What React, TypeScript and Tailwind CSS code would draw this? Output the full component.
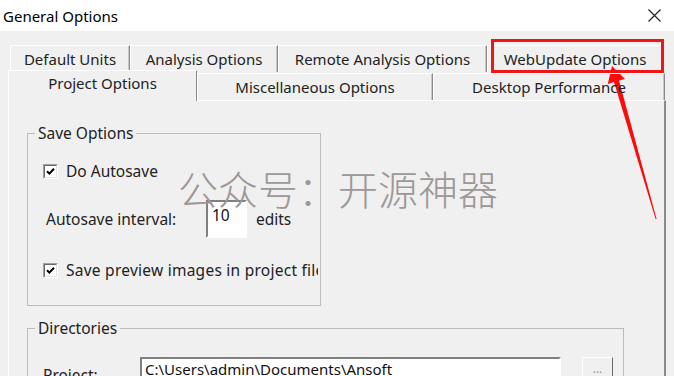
import React from "react";

const FONT = '"Noto Sans", "Noto Sans CJK SC", sans-serif';

function Check() {
  return (
    <div className="w-[15px] h-[15px] border border-t-[#a0a0a0] border-l-[#a0a0a0] border-b-white border-r-white shrink-0">
      <div className="w-full h-full border border-t-[#696969] border-l-[#696969] border-b-[#e3e3e3] border-r-[#e3e3e3] bg-white flex items-center justify-center">
        <svg width="9" height="9" viewBox="0 0 9 9">
          <path d="M1 4.2 L3.4 6.6 L8 1.8" stroke="#000" strokeWidth="2" fill="none" />
        </svg>
      </div>
    </div>
  );
}

function Tab({ label, w, h = "h-[27px]" }: { label: string; w: string; h?: string }) {
  return (
    <div
      className={`${w} ${h} shrink-0 border-t border-l border-t-white border-l-white border-r border-r-[#8a8a8a] shadow-[inset_-1px_0_0_#c8c8c8] flex items-center justify-center text-[#222] whitespace-nowrap`}
    >
      {label}
    </div>
  );
}

export default function App() {
  return (
    <div
      className="relative w-[674px] h-[376px] overflow-hidden bg-[#f0f0f0] text-[15px] leading-[20px]"
      style={{ fontFamily: FONT }}
    >
      {/* Title bar */}
      <div className="h-[31px] bg-white flex items-center justify-between pl-[3px] pr-[13px]">
        <span className="text-[#000] text-[15px]">General Options</span>
        <svg width="13" height="13" viewBox="0 0 13 13">
          <path d="M0.5 0.5 L12.5 12.5 M12.5 0.5 L0.5 12.5" stroke="#222" strokeWidth="1.2" />
        </svg>
      </div>

      {/* Tabs */}
      <div className="pt-[14px]">
        <div className="flex pl-[10px] h-[27px]">
          <Tab label="Default Units" w="w-[120px]" />
          <Tab label="Analysis Options" w="w-[148px]" />
          <Tab label="Remote Analysis Options" w="w-[209px]" />
          <Tab label="WebUpdate Options" w="w-[176px]" />
        </div>
        <div className="relative z-10 flex items-start pl-[8px] h-[30px] -mt-[2px]">
          <div className="w-[189px] h-[31px] shrink-0 bg-[#f0f0f0] border-t border-l border-t-white border-l-white border-r border-r-[#8a8a8a] flex items-start justify-center pt-[2px] text-[#222]">
            Project Options
          </div>
          <div className="mt-[3px]">
            <Tab label="Miscellaneous Options" w="w-[236px]" />
          </div>
          <div className="mt-[3px]">
            <Tab label="Desktop Performance" w="w-[232px]" />
          </div>
        </div>

        {/* Panel */}
        <div className="ml-[8px] w-[658px] h-[300px] border-t border-l border-t-white border-l-white border-r-2 border-r-[#8a8a8a] text-[15.5px]">
          <fieldset className="ml-[18px] mt-[22px] w-[294px] h-[183px] border border-[#bcbcbc] overflow-hidden">
            <legend className="ml-[7px] px-[3px] text-[#222]">Save Options</legend>
            <div className="pl-[15px] flex flex-col">
              <div className="mt-[18px] h-[20px] flex items-center gap-[8px]">
                <Check />
                <span className="text-[#222]">Do Autosave</span>
              </div>
              <div className="mt-[19px] h-[38px] flex items-center">
                <span className="ml-[3px] w-[160px] text-[#222]">Autosave interval:</span>
                <div className="w-[41px] h-[38px] border-2 border-t-[#808080] border-l-[#808080] border-b-white border-r-white bg-white pl-[4px] pt-[3px] text-[#111] leading-[20px]">
                  10
                </div>
                <span className="ml-[9px] text-[#222]">edits</span>
              </div>
              <div className="mt-[22px] h-[20px] w-[275px] overflow-hidden whitespace-nowrap flex items-center gap-[8px]">
                <Check />
                <span className="text-[#222] tracking-[0.25px]">Save preview images in project file</span>
              </div>
            </div>
          </fieldset>

          <fieldset className="ml-[18px] mt-[12px] w-[597px] h-[120px] border border-[#bcbcbc]">
            <legend className="ml-[7px] px-[3px] text-[#222]">Directories</legend>
            <div className="pl-[15px] mt-[19px] flex items-start">
              <span className="w-[97px] mt-[8px] text-[#222]">Project:</span>
              <div className="w-[421px] h-[24px] border-2 border-t-[#808080] border-l-[#808080] border-b-white border-r-white bg-white pl-[3px] text-[#111] text-[15px] leading-[20px] whitespace-nowrap overflow-hidden">
                C:\Users\admin\Documents\Ansoft
              </div>
              <div className="ml-[21px] w-[31px] h-[24px] border border-t-white border-l-white border-r-[#696969] border-b-[#696969] flex items-center justify-center text-[#999] text-[12px]">
                ...
              </div>
            </div>
          </fieldset>
        </div>
      </div>

      {/* Watermark */}
      <div
        className="absolute left-[178px] top-[163px] text-[40px] leading-[50px] font-light text-[#9d9898] whitespace-nowrap pointer-events-none"
        style={{ fontFamily: '"Noto Sans CJK SC", sans-serif' }}
      >
        公众号：开源神器
      </div>

      {/* Red highlight box */}
      <div className="absolute left-[491px] top-[39px] w-[173px] h-[34px] border-[3px] border-[#f01616] pointer-events-none" />

      {/* Red arrow */}
      <svg className="absolute left-0 top-0 pointer-events-none" width="674" height="376" viewBox="0 0 674 376">
        <polygon
          points="612,66 625,79 619,80.5 656.6,219 655.6,219 614,82 607.8,84"
          fill="#ff0a0a"
        />
      </svg>
    </div>
  );
}
